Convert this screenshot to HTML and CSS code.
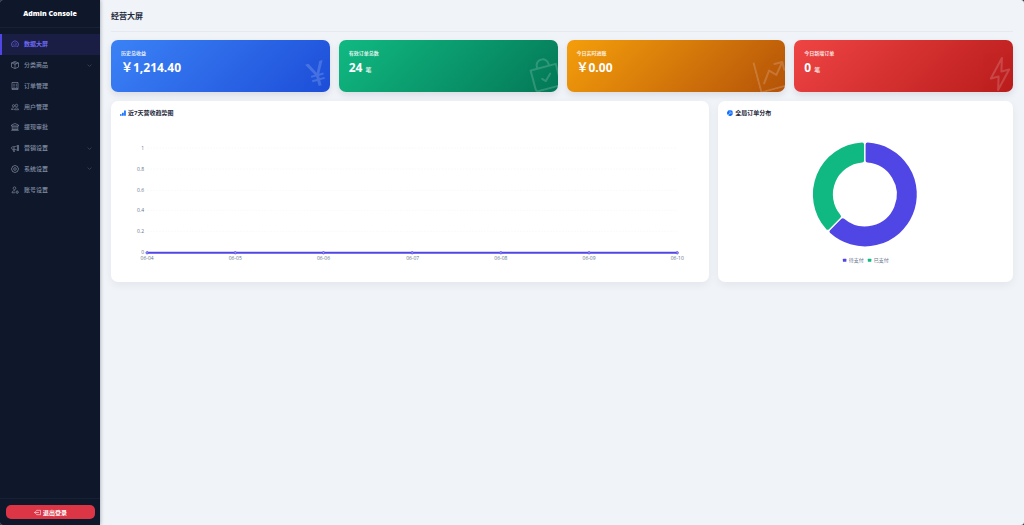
FILE: index.html
```html
<!DOCTYPE html>
<html lang="zh-CN">
<head>
<meta charset="utf-8">
<meta name="viewport" content="width=device-width, initial-scale=1">
<title>经营大屏 - Admin Console</title>
<link rel="stylesheet" href="styles.css">
</head>
<body>
<div class="shell">
  <aside class="sidebar">
    <div class="brand">Admin Console</div>
    <nav class="nav" aria-label="主导航">
      <a class="nav-item active" href="#" aria-current="page">
        <svg class="icon line" viewBox="0 0 16 16"><path d="M2.500 13.200a7 7 0 1 1 11 0c-3-1.600-8-1.600-11 0zM8 4v1.600M3.500 9H5M11 9h1.500M4.500 5.800l1 1M8 9.500l3.300-3.700"/></svg>
        <span>数据大屏</span>
      </a>
      <button class="nav-item" type="button" aria-expanded="false">
        <svg class="icon line" viewBox="0 0 16 16"><path d="M8 1l7 2.800v8.400L8 15l-7-2.800V3.800zM1 3.800l7 2.800 7-2.800M8 6.600V15M4.500 2.400l7 2.800"/></svg>
        <span>分类商品</span>
        <svg class="chevron line" viewBox="0 0 16 16"><path d="M2 5l6 6 6-6"/></svg>
      </button>
      <a class="nav-item" href="#">
        <svg class="icon line" viewBox="0 0 16 16"><path d="M2 1h12v14H2zM4.500 4.500h3M4.500 7.500h3M4.500 10.500h3M9.500 4.500h2.500M9.500 7.500h2.500M9.500 10.500h2.500M2 13h12"/></svg>
        <span>订单管理</span>
      </a>
      <a class="nav-item" href="#">
        <svg class="icon line" viewBox="0 0 16 16"><circle cx="11" cy="5" r="2.500"/><circle cx="5" cy="5.500" r="2.200"/><path d="M7 13.500c0-5 8-5 8 0zM5.500 9.500C2.500 9.300 1 11 1 13h4"/></svg>
        <span>用户管理</span>
      </a>
      <a class="nav-item" href="#">
        <svg class="icon line" viewBox="0 0 16 16"><path d="M8 1l7 3v2H1V4zM2.500 6v7M6 6v7M10 6v7M13.500 6v7M1.500 13h13M.5 15.300h15"/></svg>
        <span>提现审批</span>
      </a>
      <button class="nav-item" type="button" aria-expanded="false">
        <svg class="icon line" viewBox="0 0 16 16"><path d="M13 2.500v11M15 2v12M13 3C10.500 5 7 5.600 3 5.600c-2.600 0-2.600 4.800 0 4.800 4 0 7.500.6 10 2.600M4 10.500l1 4.500h2l-1-4.300M6 5.500v5"/></svg>
        <span>营销设置</span>
        <svg class="chevron line" viewBox="0 0 16 16"><path d="M2 5l6 6 6-6"/></svg>
      </button>
      <button class="nav-item" type="button" aria-expanded="false">
        <svg class="icon line" viewBox="0 0 16 16"><path d="M6.600 1h2.800l.6 1.700 1.800-.8 2.200 2.200-.8 1.800 1.800.7v2.800l-1.800.7.8 1.800-2.200 2.200-1.800-.8-.6 1.700H6.600L6 13.300l-1.800.8L2 11.900l.8-1.800L1 9.400V6.600l1.800-.7L2 4.100l2.200-2.200 1.800.8z"/><circle cx="8" cy="8" r="2.700"/></svg>
        <span>系统设置</span>
        <svg class="chevron line" viewBox="0 0 16 16"><path d="M2 5l6 6 6-6"/></svg>
      </button>
      <a class="nav-item" href="#">
        <svg class="icon line" viewBox="0 0 16 16"><circle cx="7" cy="4.500" r="2.700"/><path d="M8 9.500c-4-.5-6 1.500-6 4h6"/><circle cx="12.300" cy="12.300" r="2"/><path d="M12.300 9v1.300M12.300 14.300v1.300M9 12.300h1.300M14.300 12.300h1.300"/></svg>
        <span>账号设置</span>
      </a>
    </nav>
    <div class="sidebar-foot">
      <button class="logout" type="button">
        <svg class="icon line" viewBox="0 0 16 16"><path d="M6 5V3h9v10H6v-2M11 8H1M4 5L1 8l3 3"/></svg>
        <span>退出登录</span>
      </button>
    </div>
  </aside>

  <main class="main">
    <header class="page-head"><h1>经营大屏</h1></header>

    <div class="grid">
      <section class="stat blue">
        <h2>历史总收益</h2>
        <p class="value">￥1,214.40</p>
        <svg class="mark" viewBox="0 0 16 16"><path d="M8.750 14v-2.629h2.446v-.967H8.750v-1.310h2.445v-.967H9.128L12.500 2h-1.699L8.047 7.327h-.086L5.207 2H3.500l3.363 6.127H4.778v.968H7.250v1.310H4.780v.966h2.470V14z"/></svg>
      </section>
      <section class="stat green">
        <h2>有效订单总数</h2>
        <p class="value">24 <small>笔</small></p>
        <svg class="mark" viewBox="0 0 16 16"><path d="M10.854 8.146a.5.5 0 0 1 0 .708l-3 3a.5.5 0 0 1-.708 0l-1.500-1.500a.5.5 0 0 1 .708-.708L7.500 10.793l2.646-2.647a.5.5 0 0 1 .708 0"/><path d="M8 1a2.500 2.500 0 0 1 2.500 2.500V4h-5v-.5A2.500 2.500 0 0 1 8 1m3.500 3v-.5a3.500 3.500 0 1 0-7 0V4H1v10a2 2 0 0 0 2 2h10a2 2 0 0 0 2-2V4zM2 5h12v9a1 1 0 0 1-1 1H3a1 1 0 0 1-1-1z"/></svg>
      </section>
      <section class="stat amber">
        <h2>今日实时进账</h2>
        <p class="value">￥0.00</p>
        <svg class="mark" viewBox="0 0 16 16"><path d="M0 0h1v15h15v1H0zm10 3.500a.5.5 0 0 1 .5-.5h4a.5.5 0 0 1 .5.5v4a.5.5 0 0 1-1 0V4.900l-3.613 4.417a.5.5 0 0 1-.74.037L7.060 6.767l-3.656 5.027a.5.5 0 0 1-.808-.588l4-5.500a.5.5 0 0 1 .758-.06l2.609 2.610L13.445 4H10.500a.5.5 0 0 1-.5-.5"/></svg>
      </section>
      <section class="stat red">
        <h2>今日新增订单</h2>
        <p class="value">0 <small>笔</small></p>
        <svg class="mark" viewBox="0 0 16 16"><path d="M11.251.068a.5.5 0 0 1 .227.58L9.677 6.500H13a.5.5 0 0 1 .364.843l-8 8.500a.5.5 0 0 1-.842-.49L6.323 9.500H3a.5.5 0 0 1-.364-.843l8-8.500a.5.5 0 0 1 .615-.09zM4.157 8.500H7a.5.5 0 0 1 .478.647L6.110 13.590l5.732-6.090H9a.5.5 0 0 1-.478-.647L9.890 2.410z"/></svg>
      </section>

      <section class="panel wide">
        <h2>
          <svg class="panel-icon" viewBox="0 0 16 16"><path d="M0 11h4.500v4H0zM5.500 7H10v8H5.500zM11 1h4.500v14H11z"/></svg>
          <span>近7天营收趋势图</span>
        </h2>
        <svg class="chart" viewBox="0 0 579 156" role="img" aria-label="近7天营收趋势图">
          <g class="gridline"><path d="M27 30H556M27 51H556M27 72H556M27 92H556M27 113H556"/></g>
          <g class="label end">
            <text x="24" y="32">1</text><text x="24" y="53">0.8</text><text x="24" y="74">0.6</text><text x="24" y="94">0.4</text><text x="24" y="115">0.2</text><text x="24" y="136">0</text>
          </g>
          <path class="series" d="M27 134.500H556"/>
          <g class="dots">
            <circle cx="27" cy="134.500" r="1.200"/><circle cx="115" cy="134.500" r="1.200"/><circle cx="203" cy="134.500" r="1.200"/><circle cx="291.500" cy="134.500" r="1.200"/><circle cx="380" cy="134.500" r="1.200"/><circle cx="468" cy="134.500" r="1.200"/><circle cx="556" cy="134.500" r="1.200"/>
          </g>
          <g class="label mid">
            <text x="27" y="142">06-04</text><text x="115" y="142">06-05</text><text x="203" y="142">06-06</text><text x="292" y="142">06-07</text><text x="380" y="142">06-08</text><text x="468" y="142">06-09</text><text x="556" y="142">06-10</text>
          </g>
        </svg>
      </section>

      <section class="panel narrow">
        <h2>
          <svg class="panel-icon" viewBox="0 0 16 16"><path d="M15.900 8.500A8 8 0 0 1 3 14.200L8.700 8.500zM2.300 13.500A8 8 0 0 1 7.500 0v8.200zM8.500 0A8 8 0 0 1 16 7.500H8.500z"/></svg>
          <span>全局订单分布</span>
        </h2>
        <svg class="chart" viewBox="0 0 277 156" role="img" aria-label="全局订单分布">
          <g transform="translate(138 76.500)">
            <path class="pending" d="M2.750-49.920A50 50 0 1 1-33.350 37.240L-22.020 25.910A34 34 0 1 0 2.750-33.890z"/>
            <path class="paid" d="M-37.240 33.350A50 50 0 0 1-2.750-49.920V-33.890A34 34 0 0 0-25.910 22.020z"/>
          </g>
          <rect class="key-pending" x="116" y="141" width="3.500" height="3" rx=".5"/>
          <rect class="key-paid" x="141" y="141" width="3.500" height="3" rx=".5"/>
          <g class="label"><text x="122" y="144">待支付</text><text x="147" y="144">已支付</text></g>
        </svg>
      </section>
    </div>
  </main>
</div>
</body>
</html>
```
FILE: styles.css
```css
* { box-sizing: border-box; }

body {
  margin: 0;
  background: #2b2f3a;
  color: #1e293b;
  font-family: "Open Sans", "Noto Sans CJK SC", sans-serif;
  font-size: 6px;
}

h1, h2, p { margin: 0; }
button { font: inherit; border: 0; cursor: pointer; }

.shell {
  display: flex;
  min-height: 100vh;
  border-radius: 3px;
  overflow: hidden;
  background: #f0f3f8;
}

.sidebar {
  flex: 0 0 100px;
  display: flex;
  flex-direction: column;
  background: #0f172a;
  box-shadow: 0 0 4px rgba(15, 23, 42, .4);
}

.brand {
  height: 28px;
  line-height: 28px;
  border-bottom: 1px solid #182033;
  color: #fff;
  font-size: 7px;
  font-weight: 800;
  text-align: center;
}

.nav {
  display: grid;
  grid-auto-rows: 1fr;
  height: 166px;
  margin-top: 6px;
}

.nav-item {
  display: flex;
  align-items: center;
  gap: 5px;
  width: 100%;
  padding: 0 8px;
  border-left: 3px solid transparent;
  background: none;
  color: #8290a5;
  font-weight: 500;
  line-height: 8px;
  text-align: left;
  text-decoration: none;
}

.nav-item.active {
  padding-left: 9px;
  border-left: 2px solid #4f46e5;
  background: #1a1d44;
  color: #6f6bf5;
  font-weight: 600;
}

.icon { width: 8px; height: 8px; flex: none; }
.line { fill: none; stroke: currentColor; stroke-width: 1.3; }
.chevron { width: 5px; height: 5px; margin-left: auto; opacity: .8; }

.sidebar-foot {
  margin-top: auto;
  padding: 6px 5px 6px 6px;
  border-top: 1px solid #182033;
}

.logout {
  display: flex;
  align-items: center;
  justify-content: center;
  gap: 2px;
  width: 100%;
  height: 14px;
  padding: 0;
  border-radius: 5px;
  background: #dc3545;
  color: #fff;
  font-weight: 700;
}
.logout .icon { width: 7px; height: 7px; }

.main { flex: 1; min-width: 0; padding: 0 11px 12px; }

.page-head {
  height: 32px;
  margin-bottom: 8px;
  border-bottom: 1px solid #e6eaf0;
}
.page-head h1 { font-size: 8px; line-height: 32px; font-weight: 700; }

.grid {
  display: grid;
  grid-template-columns: repeat(12, 1fr);
  gap: 9px;
}

.stat {
  grid-column: span 3;
  position: relative;
  overflow: hidden;
  min-height: 52px;
  padding: 9px 10px;
  border-radius: 7px;
  color: #fff;
  box-shadow: 0 3px 7px rgba(15, 23, 42, .1);
}
.stat h2 { font-size: 5px; line-height: 8px; font-weight: 700; opacity: .85; }
.value { margin-top: 3px; font-size: 12px; line-height: 16px; font-weight: 700; }
.value small { font-size: 6px; font-weight: 500; opacity: .85; }

.mark {
  position: absolute;
  right: -3px;
  bottom: 2px;
  width: 32px;
  height: 32px;
  fill: #fff;
  opacity: .17;
  transform: rotate(-15deg);
}

.blue { background: linear-gradient(135deg, #3b82f6, #1d4ed8); }
.green { background: linear-gradient(135deg, #10b981, #047857); }
.amber { background: linear-gradient(135deg, #f59e0b, #b45309); }
.red { background: linear-gradient(135deg, #ef4444, #b91c1c); }

.panel {
  min-width: 0;
  padding: 8px 9px;
  border-radius: 7px;
  background: #fff;
  box-shadow: 0 3px 8px rgba(15, 23, 42, .06);
}
.wide { grid-column: span 8; }
.narrow { grid-column: span 4; }

.panel h2 {
  display: flex;
  align-items: center;
  gap: 2px;
  font-size: 6px;
  line-height: 8px;
  font-weight: 700;
}
.panel-icon { width: 6px; height: 6px; fill: #0d6efd; }

.chart { display: block; width: 100%; height: auto; margin-top: 1px; }
.gridline { fill: none; stroke: #f8fafc; stroke-width: 1; stroke-dasharray: 2 1; }
.label { fill: #64748b; font-size: 5px; }
.end { text-anchor: end; }
.mid { text-anchor: middle; }
.series { fill: none; stroke: #4f46e5; stroke-width: 2; }
.dots { fill: #a5a0f5; stroke: #4f46e5; stroke-width: .7; }

.pending, .paid { stroke-width: 4; stroke-linejoin: round; }
.pending { fill: #4f46e5; stroke: #4f46e5; }
.paid { fill: #10b981; stroke: #10b981; }
.key-pending { fill: #4f46e5; }
.key-paid { fill: #10b981; }
```
